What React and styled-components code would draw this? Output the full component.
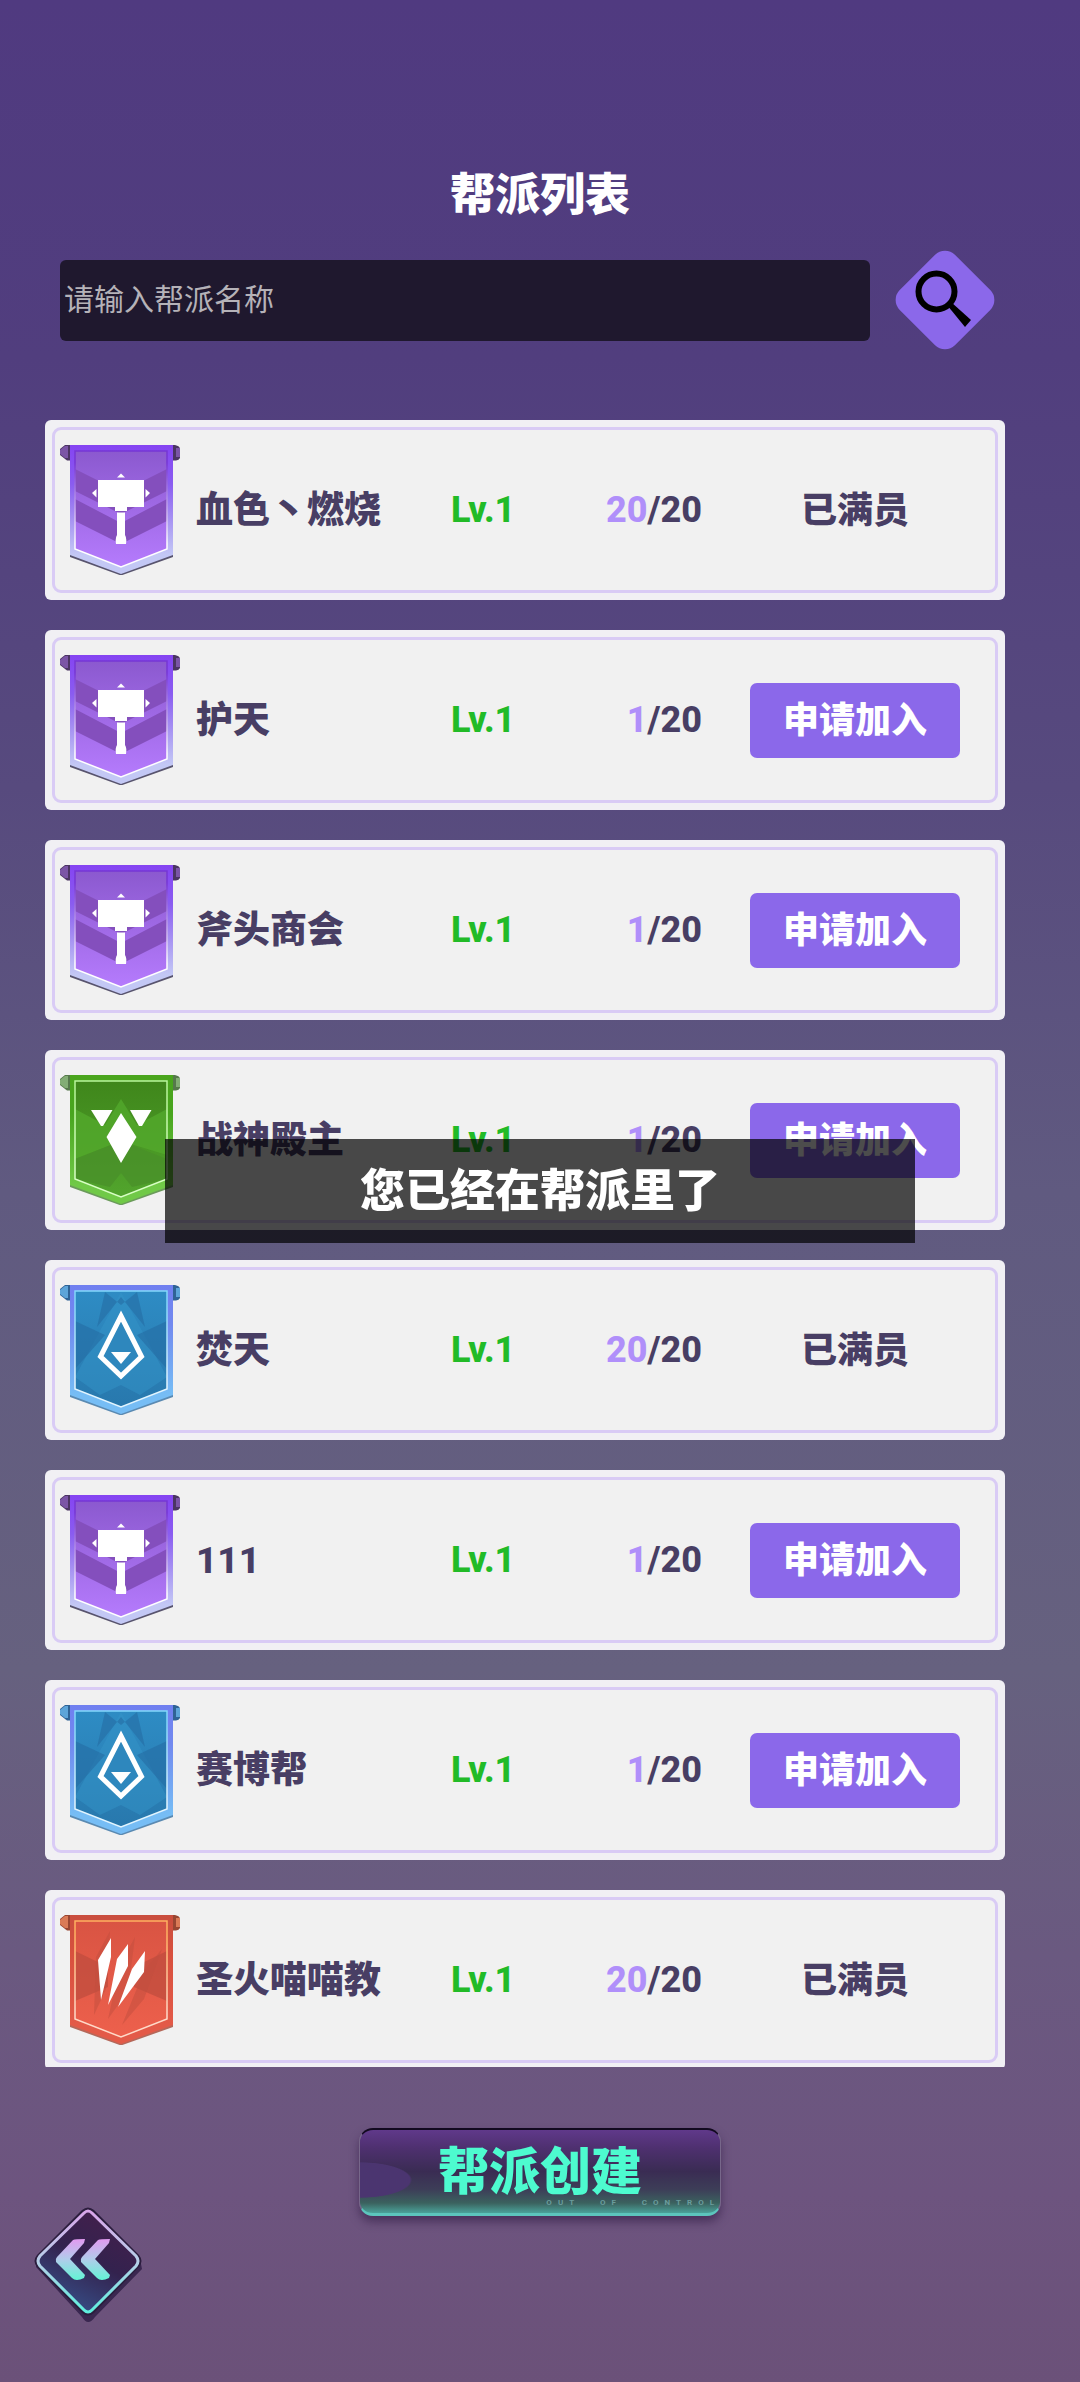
import React from 'react';
import styled, { createGlobalStyle } from 'styled-components';

const GlobalStyle = createGlobalStyle`
  * { box-sizing: border-box; }
  body { margin: 0; }
  button, input { font: inherit; }
`;

const Page = styled.div`
  min-height: 100vh;
  display: flex;
  flex-direction: column;
  font-family: Roboto, 'Noto Sans CJK SC', sans-serif;
  color: #483e64;
  background: linear-gradient(180deg, #503a80 0%, #513e7e 15%, #574a7e 33%, #605a80 50%, #66617f 70%, #6a5980 82%, #6d547f 92%, #6b5179 100%);
`;

const Title = styled.h1`
  margin: 0;
  padding-top: 163px;
  font-size: 45px;
  line-height: 66px;
  font-weight: 900;
  color: #fff;
  text-align: center;
`;

const SearchBar = styled.form`
  display: flex;
  align-items: center;
  gap: 24px;
  margin: 20px 84px 0 60px;
`;

const SearchInput = styled.input`
  flex: 1;
  min-width: 0;
  height: 81px;
  padding: 0 4px 2px;
  border: 0;
  border-radius: 6px;
  background: #1f182e;
  color: #fff;
  font-size: 30px;
  &::placeholder { color: #b5b2b8; opacity: 1; }
`;

const IconButton = styled.button`
  display: block;
  flex: none;
  padding: 0;
  border: 0;
  background: none;
  cursor: pointer;
  svg { display: block; }
`;

const List = styled.ul`
  list-style: none;
  display: flex;
  flex-direction: column;
  gap: 30px;
  max-height: 1647px;
  overflow: hidden;
  margin: 69px 75px 0 45px;
  padding: 0;
`;

const Card = styled.li`
  flex: none;
  height: 180px;
  padding: 7px;
  border-radius: 6px;
  background: #f1f0f4;
`;

const CardBody = styled.div`
  height: 100%;
  display: grid;
  grid-template-columns: 120px 1fr 112px 140px 258px;
  align-items: center;
  padding: 0 35px 0 5px;
  border: 3px solid #d9cbf5;
  border-radius: 9px;
  background: #f1f1f1;
  font-size: 36px;
  line-height: 54px;
  font-weight: 800;
`;

const Banner = styled.svg`
  display: block;
  width: 120px;
  height: 130px;
  align-self: start;
  margin-top: 15px;
`;

const Name = styled.span`
  padding: 2px 0 0 16px;
  font-size: 37px;
  white-space: nowrap;
`;

const Level = styled.span`
  padding-left: 1px;
  color: #22bb27;
`;

const Count = styled.span`
  text-align: right;
  em { font-style: normal; color: #b08ffa; }
`;

const Action = styled.div`
  padding-left: 48px;
  text-align: center;
`;

const FullLabel = styled.span`
  display: block;
  padding-top: 2px;
`;

const JoinButton = styled.button`
  display: block;
  width: 100%;
  height: 75px;
  padding: 2px 0 0;
  border: 0;
  border-radius: 7px;
  background: #8b68ea;
  color: #fff;
  font-weight: 900;
  cursor: pointer;
`;

const Footer = styled.footer`
  display: grid;
  justify-items: center;
  padding: 61px 30px 57px;
`;

const CreateButton = styled.button`
  position: relative;
  overflow: hidden;
  width: 362px;
  height: 88px;
  padding: 2px 0 0;
  border: 1px solid #77678a;
  border-top: 2px solid #120a20;
  border-bottom: 3px solid #5cc6bd;
  border-radius: 14px;
  background:
    radial-gradient(ellipse 52px 18px at 0 50px, #4b3570 96%, transparent 100%),
    linear-gradient(180deg, #60398a 0%, #4e306f 22%, #3a2c53 50%, #3d3e58 72%, #3b625f 88%, #4aa39a 100%);
  box-shadow: 0 6px 10px rgba(40, 20, 60, 0.5);
  color: #4dfbcf;
  font-size: 51px;
  line-height: 76px;
  font-weight: 900;
  cursor: pointer;
`;

const Motto = styled.small`
  position: absolute;
  right: 0;
  bottom: 5px;
  font-size: 8px;
  line-height: 10px;
  font-weight: 700;
  letter-spacing: 6px;
  word-spacing: 12px;
  color: #6a9c9c;
`;

const BackButton = styled(IconButton)`
  justify-self: start;
  margin-top: -11px;
`;

const Toast = styled.div`
  position: fixed;
  left: 165px;
  right: 165px;
  top: 1139px;
  padding: 20px 0 18px;
  background: rgba(0, 0, 0, 0.7);
  color: #fff;
  font-size: 45px;
  line-height: 66px;
  font-weight: 900;
  text-align: center;
`;

const THEMES = {
  hammer: { edge: ['#8544f2', '#8a5cf0', '#c3c8f5'], fill: ['#8b59cf', '#b57bfd'], line: ['#7636d4', '#fff'], rod: '#4b3563', knob: '#7b55a6', shade: '#58546e' },
  leaf: { edge: ['#4aa51d', '#48a51e', '#70c947'], fill: ['#3f861b', '#52a52d'], line: ['#b8f59b', '#d8ffc4'], rod: '#56794b', knob: '#83ad75', shade: '#6b9b5b' },
  crystal: { edge: ['#7080f0', '#7289ef', '#76bdf5'], fill: ['#2e8cc4', '#2878ad'], line: ['#83d7fa', '#e2f5ff'], rod: '#2f6396', knob: '#5da5d9', shade: '#5a8ab2' },
  claw: { edge: ['#c94e3e', '#d8503e', '#e35a48'], fill: ['#d95443', '#ed604c'], line: ['#ffb060', '#ffd9c8'], rod: '#994632', knob: '#da7b57', shade: '#b5685a' },
};

function Emblem({ kind }) {
  if (kind === 'hammer') {
    return (
      <>
        <path d="M15 24 61 47 107 24V46L61 69 15 46ZM15 54 61 78 107 54V76L61 99 15 76Z" fill="#844fbd" />
        <path d="M38 35H84V62H67V66H55V62H38ZM61 28.500 65 32.500H57ZM32 48 36.500 44V52.500ZM90 48 85.500 44V52.500ZM57 67.500H65V90Q67 93 66 99H56Q55 93 57 90Z" fill="#fff" />
      </>
    );
  }
  if (kind === 'leaf') {
    return (
      <>
        <path d="M15 34 45 50 61 24 77 50 107 34V80L61 66 15 84Z" fill="#52a92c" opacity=".8" />
        <path d="M61 66 107 84V104L72 112 61 98 50 112 15 104V84Z" fill="#488f29" opacity=".7" />
        <path d="M31 35H52.500L43 51H41ZM70 35H91.500L82 51H79ZM61 38 76.500 62 61 88 46.500 62Z" fill="#fff" />
      </>
    );
  }
  if (kind === 'crystal') {
    return (
      <>
        <path d="M61 7 107 92 80 110 61 100 40 110 15 92Z" fill="#3494c8" opacity=".5" />
        <path d="M15 36 45 50 15 84ZM107 36 77 50 107 84ZM45 7 61 20 77 7 85 42 61 12 37 42Z" fill="#246da3" opacity=".6" />
        <path d="M61 31 81.500 71.500 61 91 40.500 71.500Z" fill="#2e87bd" stroke="#fff" strokeWidth="5" />
        <path d="M51 67H71L61 79Z" fill="#fff" />
      </>
    );
  }
  return (
    <>
      <path d="M15 36 48 52V72L15 86ZM107 36 74 52V72L107 86Z" fill="#bd4b3d" opacity=".7" />
      <path d="M50 16 36 42 34 100 46 74ZM75 22 60 50 48 104 68 76ZM102 34 84 56 62 110 84 84Z" fill="#c24d3e" opacity=".5" />
      <path d="M51 23V42L41 85 38 45ZM68 29V51L48 90 57 44ZM85 36 84 57 58 92 72 54Z" fill="#fff" />
    </>
  );
}

function GuildBanner({ kind, id }) {
  const t = THEMES[kind];
  return (
    <Banner viewBox="0 0 120 130" aria-hidden="true">
      <defs>
        <linearGradient id={`edge-${id}`} x1="0" y1="0" x2="0" y2="1">
          <stop offset="0" stopColor={t.edge[0]} />
          <stop offset=".3" stopColor={t.edge[1]} />
          <stop offset=".85" stopColor={t.edge[2]} />
        </linearGradient>
        <linearGradient id={`fill-${id}`} x1="0" y1="0" x2="0" y2="1">
          <stop offset="0" stopColor={t.fill[0]} />
          <stop offset="1" stopColor={t.fill[1]} />
        </linearGradient>
        <linearGradient id={`line-${id}`} x1="0" y1="0" x2="0" y2="1">
          <stop offset=".1" stopColor={t.line[0]} />
          <stop offset=".8" stopColor={t.line[1]} />
        </linearGradient>
      </defs>
      <path d="M5 0H115Q120 1 120 4V13Q119 15 116 15.500H7L0 10V4Z" fill={t.rod} />
      <path d="M5 1H8V13H5L0 9V5ZM116 3H120V12H116Z" fill={t.knob} />
      <path d="M10 100V112L61 130.500 113 112V100Z" fill={t.shade} />
      <path d="M10 0H113V110L61 129 10 110Z" fill={`url(#edge-${id})`} />
      <path d="M15 6H107V104L61 122 15 104Z" fill={`url(#fill-${id})`} />
      <Emblem kind={kind} />
      <path d="M15 6H107V104L61 122 15 104Z" fill="none" stroke={`url(#line-${id})`} strokeWidth="1.500" />
    </Banner>
  );
}

const GUILDS = [
  { name: '血色丶燃烧', kind: 'hammer', members: 20 },
  { name: '护天', kind: 'hammer', members: 1 },
  { name: '斧头商会', kind: 'hammer', members: 1 },
  { name: '战神殿主', kind: 'leaf', members: 1 },
  { name: '焚天', kind: 'crystal', members: 20 },
  { name: '111', kind: 'hammer', members: 1 },
  { name: '赛博帮', kind: 'crystal', members: 1 },
  { name: '圣火喵喵教', kind: 'claw', members: 20 },
];

function GuildCard({ guild, id }) {
  return (
    <Card>
      <CardBody>
        <GuildBanner kind={guild.kind} id={id} />
        <Name>{guild.name}</Name>
        <Level>Lv.1</Level>
        <Count><em>{guild.members}</em>/20</Count>
        <Action>
          {guild.members === 20
            ? <FullLabel>已满员</FullLabel>
            : <JoinButton type="button">申请加入</JoinButton>}
        </Action>
      </CardBody>
    </Card>
  );
}

export default function App() {
  return (
    <Page>
      <GlobalStyle />
      <Title>帮派列表</Title>
      <SearchBar onSubmit={(e) => e.preventDefault()}>
        <SearchInput type="text" aria-label="帮派名称" placeholder="请输入帮派名称" />
        <IconButton type="submit" aria-label="搜索">
          <svg width="102" height="102" viewBox="0 0 102 102">
            <rect x="12" y="12" width="78" height="78" rx="14" transform="rotate(45 51 51)" fill="#8b68ea" />
            <circle cx="42.500" cy="42.500" r="18" fill="none" stroke="#000" strokeWidth="6" />
            <path d="M53 56 57 53 77 71 71 78Z" fill="#000" />
          </svg>
        </IconButton>
      </SearchBar>
      <List>
        {GUILDS.map((g, i) => <GuildCard key={g.name} guild={g} id={i} />)}
      </List>
      <Footer>
        <CreateButton type="button">
          帮派创建
          <Motto>OUT OF CONTROL</Motto>
        </CreateButton>
        <BackButton type="button" aria-label="返回">
          <svg width="116" height="122" viewBox="0 0 116 122">
            <defs>
              <linearGradient id="back-line" x1="0" y1="0" x2="0" y2="1">
                <stop offset="0" stopColor="#d9a5ea" />
                <stop offset=".5" stopColor="#b6cfe8" />
                <stop offset="1" stopColor="#5eeedd" />
              </linearGradient>
              <linearGradient id="back-fill" x1=".8" y1="0" x2=".3" y2="1">
                <stop offset="0" stopColor="#451f4c" />
                <stop offset=".5" stopColor="#33224e" />
                <stop offset="1" stopColor="#37508a" />
              </linearGradient>
              <linearGradient id="back-arrow" x1="0" y1="0" x2="0" y2="1">
                <stop offset="0" stopColor="#e29af0" />
                <stop offset=".5" stopColor="#b0cdeb" />
                <stop offset="1" stopColor="#62f5d5" />
              </linearGradient>
            </defs>
            <path d="M6 62 52 112Q58 122 65 112L112 64 110 54H6Z" fill="#3a2750" />
            <path d="M52 5Q58 0 64 5L109 50Q114 56 109 62L64 108Q58 113 52 108L7 62Q2 56 7 50Z" fill="#2b1d3d" />
            <path d="M54 8Q58 4 62 8L106 51Q110 56 106 61L62 105Q58 109 54 105L10 61Q6 56 10 51Z" fill="url(#back-fill)" stroke="url(#back-line)" strokeWidth="3" />
            <path d="M43 35Q45 34 55 34L54 38 40 54 55 70 54 73Q46 77 42 73L26 57Q25 54 27 52ZM68 35Q70 34 80 34L79 38 65 54 80 70 79 73Q71 77 67 73L51 57Q50 54 52 52Z" fill="url(#back-arrow)" />
          </svg>
        </BackButton>
      </Footer>
      <Toast role="status">您已经在帮派里了</Toast>
    </Page>
  );
}
